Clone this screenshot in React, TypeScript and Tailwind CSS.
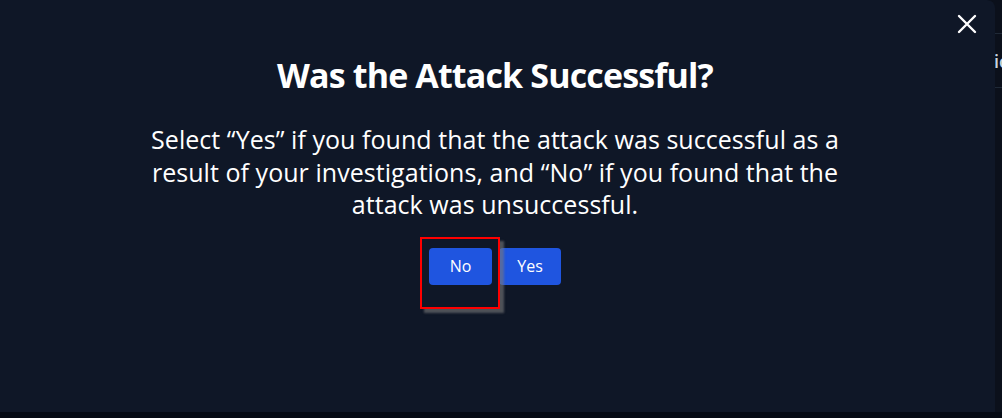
import React from "react";

export default function App() {
  return (
    <div className="w-[1002px] h-[418px] bg-[#050a14] overflow-hidden relative" style={{ fontFamily: '"Open Sans", "Noto Sans", sans-serif' }}>
      <div className="absolute right-0 top-0 w-[12px] h-[412px] bg-[#0b101b]">
        <div className="h-[34px] border-b border-[#1f2937]"></div>
        <div className="h-[54px] border-b border-[#1f2937] pt-[14px] text-[18px] font-semibold text-[#cbd5e1] pl-[4px]">ic</div>
      </div>
      <div className="relative w-[995px] h-[412px] pr-[5px] bg-[#0f1727] rounded-tr-lg flex flex-col items-center">
        <button className="absolute right-[16px] top-[12px] text-white">
          <svg width="24" height="24" viewBox="0 0 24 24" fill="none" stroke="currentColor" strokeWidth="2.4" strokeLinecap="round">
            <path d="M4 4L20 20M20 4L4 20" />
          </svg>
        </button>
        <h1 className="mt-[55px] text-[34px] leading-[40px] font-bold text-white tracking-[-0.85px]">Was the Attack Successful?</h1>
        <p className="mt-[28px] text-center text-[25px] leading-[32.5px] text-white tracking-[0.05px] whitespace-nowrap">
          Select “Yes” if you found that the attack was successful as a<br />
          result of your investigations, and “No” if you found that the<br />
          attack was unsuccessful.
        </p>
        <div className="mt-[27px] flex gap-[7px]">
          <div className="relative">
            <button className="w-[63px] h-[37px] rounded bg-[#1f55e0] text-white text-[16px]">No</button>
            <div className="absolute left-[-9px] top-[-11px] w-[80px] h-[72px] border-2 border-[#ff0000] shadow-[4px_4px_2px_rgba(120,120,120,0.6)] pointer-events-none"></div>
          </div>
          <button className="w-[62px] h-[37px] rounded bg-[#1f55e0] text-white text-[16px]">Yes</button>
        </div>
      </div>
    </div>
  );
}
